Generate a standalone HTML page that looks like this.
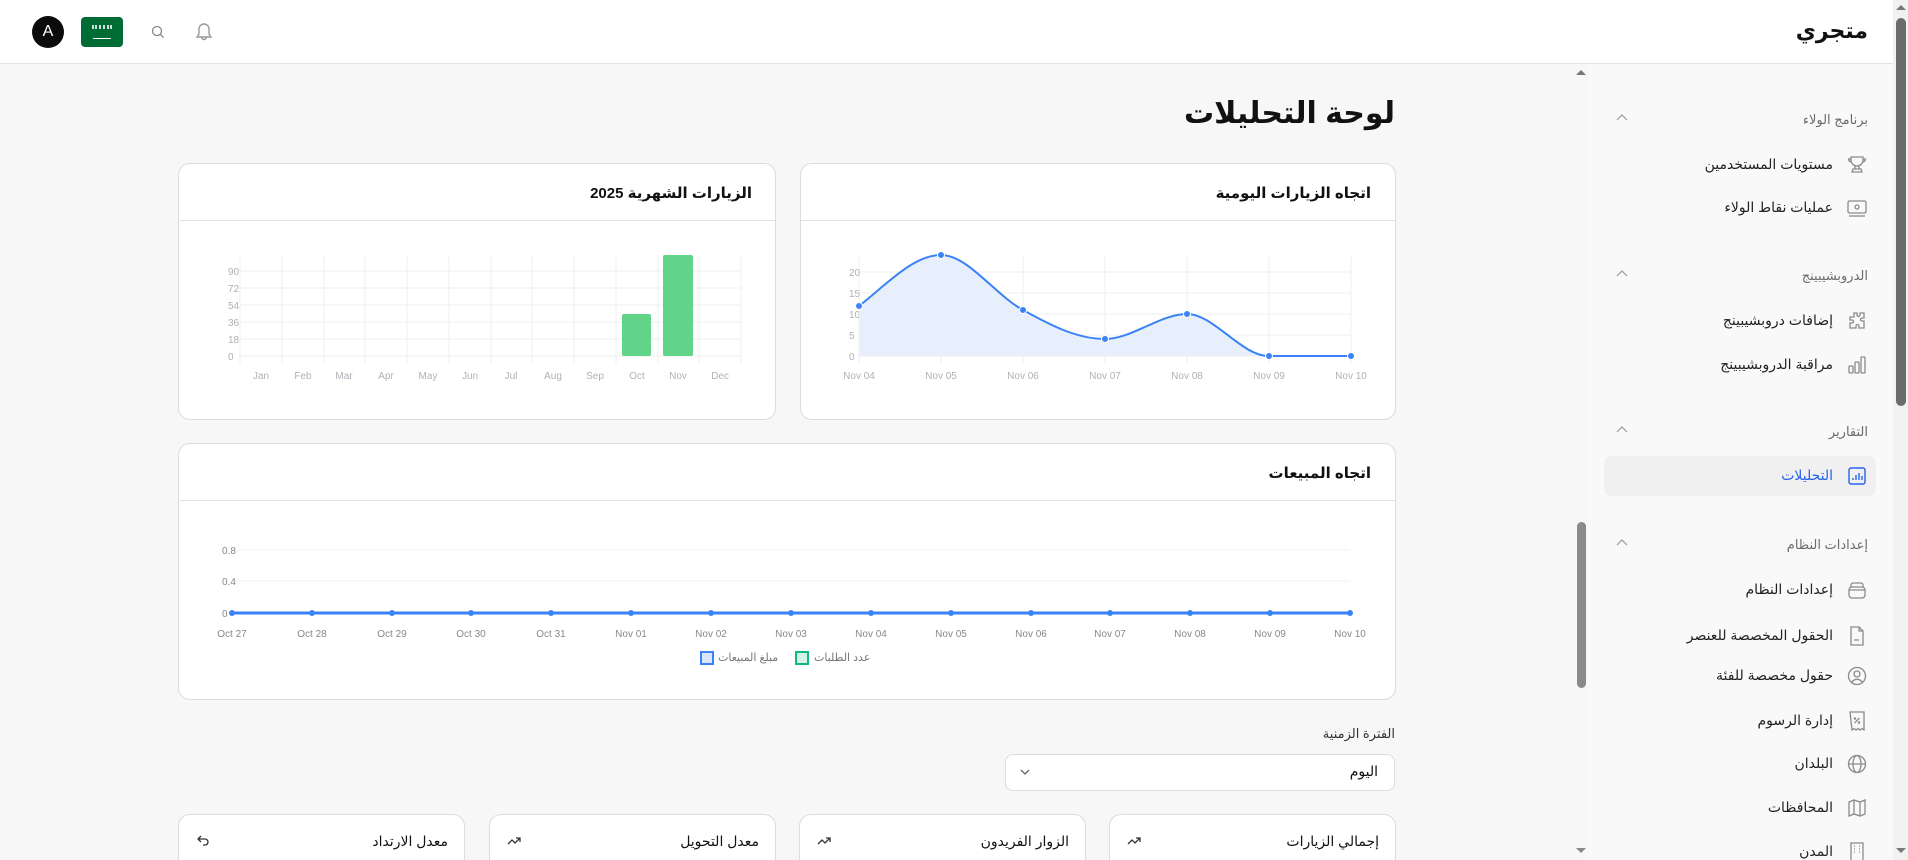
<!DOCTYPE html>
<html lang="ar" dir="rtl"><head><meta charset="utf-8"><style>
*{margin:0;padding:0;box-sizing:border-box}
html{width:1908px;height:860px;overflow:hidden}
body{width:1908px;height:860px;overflow:hidden;background:#f7f7f7;font-family:"Liberation Sans","DejaVu Sans",sans-serif;position:relative;color:#111}
.a{position:absolute}
.t{position:absolute;white-space:nowrap;direction:rtl}
.card{position:absolute;background:#fff;border:1px solid #dcdcdc;border-radius:12px;overflow:hidden}
.hd{position:absolute;left:0;right:0;top:0;height:57px;border-bottom:1px solid #e2e2e2}
.sec{font-size:13px;color:#6b6b6b}
.it{font-size:14px;color:#222}
.ic{position:absolute;width:22px;height:22px}
</style></head><body>
<div class="a" style="left:0;top:0;width:1893px;height:64px;background:#fff;border-bottom:1px solid #e2e2e2"></div>
<div class="a" style="left:32px;top:16px;width:32px;height:32px;border-radius:50%;background:#0b0b0b;color:#fff;font-size:16px;text-align:center;line-height:32px;direction:ltr">A</div>
<div class="a" style="left:81px;top:17px;width:42px;height:30px;border-radius:4px;background:#006c35">
 <div class="a" style="left:11px;top:8px;width:20px;height:4px;border-top:2px dotted #fff;border-bottom:2px dotted #fff;opacity:.8"></div>
 <div class="a" style="left:12px;top:21px;width:18px;height:1px;background:#fff"></div>
</div>
<svg class="a" style="left:150px;top:24px" width="16" height="16" viewBox="0 0 16 16" fill="none" stroke="#888" stroke-width="1.3"><circle cx="7" cy="7" r="4.5"/><path d="M10.3 10.3L13.5 13.5"/></svg>
<svg class="a" style="left:193px;top:20px" width="22" height="24" viewBox="0 0 22 24" fill="none" stroke="#999" stroke-width="1.4"><path d="M4 17h14l-2-3V9a5 5 0 0 0-10 0v5z"/><path d="M8.5 17a2.5 2.5 0 0 0 5 0"/></svg>
<div class="t" style="right:40px;top:18px;font-size:22px;font-weight:bold">متجري</div>

<div class="a" style="left:1893px;top:0;width:15px;height:860px;background:#f1f1f1"></div>
<div class="a" style="left:1896px;top:18px;width:10px;height:388px;border-radius:5px;background:#6b6b6b"></div>
<div class="a" style="left:1896px;top:5px;border:5px solid transparent;border-bottom:5px solid #777;border-top:0"></div>
<div class="a" style="left:1896px;top:848px;border:5px solid transparent;border-top:5px solid #777;border-bottom:0"></div>

<div class="a" style="left:1573px;top:65px;width:320px;height:795px;background:#f9f9f9"></div>
<div class="a" style="left:1573px;top:65px;width:15px;height:795px;background:#f7f7f7"></div>
<div class="a" style="left:1577px;top:522px;width:9px;height:166px;border-radius:5px;background:#8a8a8a"></div>
<div class="a" style="left:1576px;top:70px;border:5px solid transparent;border-bottom:5px solid #777;border-top:0"></div>
<div class="a" style="left:1576px;top:848px;border:5px solid transparent;border-top:5px solid #888;border-bottom:0"></div>

<div class="t sec" style="right:40px;top:112px">برنامج الولاء</div>
<div class="t sec" style="right:40px;top:268px">الدروبشيبينج</div>
<div class="t sec" style="right:40px;top:424px">التقارير</div>
<div class="t sec" style="right:40px;top:537px">إعدادات النظام</div>
<svg class="a" style="left:1615px;top:113px" width="14" height="10" viewBox="0 0 14 10" fill="none" stroke="#999" stroke-width="1.2"><path d="M2 7l5-5 5 5"/></svg>
<svg class="a" style="left:1615px;top:269px" width="14" height="10" viewBox="0 0 14 10" fill="none" stroke="#999" stroke-width="1.2"><path d="M2 7l5-5 5 5"/></svg>
<svg class="a" style="left:1615px;top:425px" width="14" height="10" viewBox="0 0 14 10" fill="none" stroke="#999" stroke-width="1.2"><path d="M2 7l5-5 5 5"/></svg>
<svg class="a" style="left:1615px;top:538px" width="14" height="10" viewBox="0 0 14 10" fill="none" stroke="#999" stroke-width="1.2"><path d="M2 7l5-5 5 5"/></svg>

<div class="a" style="left:1604px;top:456px;width:272px;height:40px;border-radius:8px;background:#f0f0f0"></div>

<div class="t it" style="right:75px;top:156px">مستويات المستخدمين</div>
<div class="t it" style="right:75px;top:199px">عمليات نقاط الولاء</div>
<div class="t it" style="right:75px;top:312px">إضافات دروبشيبينج</div>
<div class="t it" style="right:75px;top:356px">مراقبة الدروبشيبينج</div>
<div class="t it" style="right:75px;top:467px;color:#2563eb">التحليلات</div>
<div class="t it" style="right:75px;top:581px">إعدادات النظام</div>
<div class="t it" style="right:75px;top:627px">الحقول المخصصة للعنصر</div>
<div class="t it" style="right:75px;top:667px">حقول مخصصة للفئة</div>
<div class="t it" style="right:75px;top:712px">إدارة الرسوم</div>
<div class="t it" style="right:75px;top:755px">البلدان</div>
<div class="t it" style="right:75px;top:799px">المحافظات</div>
<div class="t it" style="right:75px;top:843px">المدن</div>

<svg class="ic" style="left:1846px;top:154px" viewBox="0 0 22 22" fill="none" stroke="#8a8a8a" stroke-width="1.3"><path d="M5 3h12v3a6 6 0 0 1-12 0z"/><path d="M5 5H2.5a3 3 0 0 0 3 3M17 5h2.5a3 3 0 0 1-3 3"/><path d="M9 12v3h4v-3M7 15h8l1 3H6z"/></svg>
<svg class="ic" style="left:1846px;top:197px" viewBox="0 0 22 22" fill="none" stroke="#8a8a8a" stroke-width="1.3"><rect x="2" y="4" width="18" height="12" rx="1.5"/><circle cx="11" cy="10" r="2"/><path d="M3 19h16"/></svg>
<svg class="ic" style="left:1846px;top:310px" viewBox="0 0 22 22" fill="none" stroke="#8a8a8a" stroke-width="1.3"><path d="M8 3h3v2a1.5 1.5 0 0 0 3 0V3h4v5h-2a1.5 1.5 0 0 0 0 3h2v7h-5v-2a1.5 1.5 0 0 0-3 0v2H4v-5h2a1.5 1.5 0 0 0 0-3H4V7h4z"/></svg>
<svg class="ic" style="left:1846px;top:354px" viewBox="0 0 22 22" fill="none" stroke="#8a8a8a" stroke-width="1.3"><rect x="3" y="12" width="4" height="7" rx="1"/><rect x="9" y="8" width="4" height="11" rx="1"/><rect x="15" y="3" width="4" height="16" rx="1"/></svg>
<svg class="ic" style="left:1846px;top:465px" viewBox="0 0 22 22" fill="none" stroke="#2563eb" stroke-width="1.4"><rect x="3" y="3" width="16" height="16" rx="2"/><path d="M7 15v-2M10 15v-5M13 15v-7M16 15v-4"/></svg>
<svg class="ic" style="left:1846px;top:579px" viewBox="0 0 22 22" fill="none" stroke="#8a8a8a" stroke-width="1.3"><rect x="3" y="8" width="16" height="11" rx="3"/><path d="M5 8V6a2 2 0 0 1 2-2h8a2 2 0 0 1 2 2v2M3 11h16"/></svg>
<svg class="ic" style="left:1846px;top:625px" viewBox="0 0 22 22" fill="none" stroke="#8a8a8a" stroke-width="1.3"><path d="M5 2h8l4 4v14H5z"/><path d="M13 2v4h4M8 15h5"/></svg>
<svg class="ic" style="left:1846px;top:665px" viewBox="0 0 22 22" fill="none" stroke="#8a8a8a" stroke-width="1.3"><circle cx="11" cy="11" r="8.5"/><circle cx="11" cy="9" r="3"/><path d="M6 17a6 6 0 0 1 10 0"/></svg>
<svg class="ic" style="left:1846px;top:710px" viewBox="0 0 22 22" fill="none" stroke="#8a8a8a" stroke-width="1.3"><path d="M4 2h14v18l-2-1.5-2 1.5-2-1.5-2 1.5-2-1.5-2 1.5z"/><path d="M8.5 13l5-5"/><circle cx="9" cy="8.5" r=".6"/><circle cx="13" cy="12.5" r=".6"/></svg>
<svg class="ic" style="left:1846px;top:753px" viewBox="0 0 22 22" fill="none" stroke="#8a8a8a" stroke-width="1.3"><circle cx="11" cy="11" r="8.5"/><ellipse cx="11" cy="11" rx="4" ry="8.5"/><path d="M2.5 11h17"/></svg>
<svg class="ic" style="left:1846px;top:797px" viewBox="0 0 22 22" fill="none" stroke="#8a8a8a" stroke-width="1.3"><path d="M3 5l5-2 6 2 5-2v14l-5 2-6-2-5 2z"/><path d="M8 3v14M14 5v14"/></svg>
<svg class="ic" style="left:1846px;top:841px" viewBox="0 0 22 22" fill="none" stroke="#8a8a8a" stroke-width="1.3"><rect x="5" y="2" width="12" height="18"/><path d="M8 5h1M13 5h1M8 8h1M13 8h1M8 11h1M13 11h1"/></svg>

<div class="t" style="right:513px;top:96px;font-size:30px;font-weight:bold">لوحة التحليلات</div>

<div class="card" style="left:178px;top:163px;width:598px;height:257px">
 <div class="hd"></div>
 <div class="t" style="right:23px;top:20px;font-size:15px;font-weight:bold">الزيارات الشهرية 2025</div>
</div>
<svg class="a" style="left:178px;top:163px" width="598" height="257" viewBox="178 163 598 257" font-family="Liberation Sans, sans-serif" font-size="10" fill="#b0b0b8">
 <g stroke="#efefef" stroke-width="1">
  <path d="M240 356H741M240 339H741M240 322H741M240 305H741M240 288H741M240 271H741"/>
  <path d="M240 255V364M282 255V364M324 255V364M365 255V364M407 255V364M449 255V364M491 255V364M532 255V364M574 255V364M616 255V364M658 255V364M699 255V364M741 255V364"/>
 </g>
 <g text-anchor="end"><text x="228" y="360">0</text><text x="228" y="343">18</text><text x="228" y="326">36</text><text x="228" y="309">54</text><text x="228" y="292">72</text><text x="228" y="275">90</text></g>
 <g text-anchor="middle"><text x="261" y="379">Jan</text><text x="303" y="379">Feb</text><text x="344" y="379">Mar</text><text x="386" y="379">Apr</text><text x="428" y="379">May</text><text x="470" y="379">Jun</text><text x="511" y="379">Jul</text><text x="553" y="379">Aug</text><text x="595" y="379">Sep</text><text x="637" y="379">Oct</text><text x="678" y="379">Nov</text><text x="720" y="379">Dec</text></g>
 <rect x="622" y="314" width="29" height="42" rx="2" fill="#62d48a"/>
 <rect x="663" y="255" width="30" height="101" rx="2" fill="#62d48a"/>
</svg>

<div class="card" style="left:800px;top:163px;width:596px;height:257px">
 <div class="hd"></div>
 <div class="t" style="right:24px;top:20px;font-size:15px;font-weight:bold">اتجاه الزيارات اليومية</div>
</div>
<svg class="a" style="left:800px;top:163px" width="596" height="257" viewBox="800 163 596 257" font-family="Liberation Sans, sans-serif" font-size="10" fill="#b0b0b8">
 <g stroke="#efefef"><path d="M859 356H1351M859 335H1351M859 314H1351M859 293H1351M859 272H1351"/><path d="M859 255V364M941 255V364M1023 255V364M1105 255V364M1187 255V364M1269 255V364M1351 255V364"/></g>
 <g text-anchor="end"><text x="849" y="360">0</text><text x="849" y="339">5</text><text x="849" y="318">10</text><text x="849" y="297">15</text><text x="849" y="276">20</text></g>
 <g text-anchor="middle"><text x="859" y="379">Nov 04</text><text x="941" y="379">Nov 05</text><text x="1023" y="379">Nov 06</text><text x="1105" y="379">Nov 07</text><text x="1187" y="379">Nov 08</text><text x="1269" y="379">Nov 09</text><text x="1351" y="379">Nov 10</text></g>
 <path d="M859 306C886 285 913 255 941 255C968 255 995 295 1023 310C1050 325 1077 339 1105 339C1132 339 1160 314 1187 314C1214 314 1241 356 1269 356L1351 356V356H859Z" fill="#e8effc"/>
 <path d="M859 306C886 285 913 255 941 255C968 255 995 295 1023 310C1050 325 1077 339 1105 339C1132 339 1160 314 1187 314C1214 314 1241 356 1269 356L1351 356" fill="none" stroke="#3b82f6" stroke-width="2"/>
 <g fill="#3b82f6" stroke="#fff" stroke-width="1"><circle cx="859" cy="306" r="3.5"/><circle cx="941" cy="255" r="3.5"/><circle cx="1023" cy="310" r="3.5"/><circle cx="1105" cy="339" r="3.5"/><circle cx="1187" cy="314" r="3.5"/><circle cx="1269" cy="356" r="3.5"/><circle cx="1351" cy="356" r="3.5"/></g>
</svg>

<div class="card" style="left:178px;top:443px;width:1218px;height:257px">
 <div class="hd"></div>
 <div class="t" style="right:24px;top:20px;font-size:15px;font-weight:bold">اتجاه المبيعات</div>
</div>
<svg class="a" style="left:178px;top:443px" width="1218" height="257" viewBox="178 443 1218 257" font-family="Liberation Sans, sans-serif" font-size="10" fill="#888">
 <g stroke="#f0f0f0"><path d="M232 550H1350M232 581H1350M232 613H1350"/></g>
 <g text-anchor="end"><text x="222" y="554">0.8</text><text x="222" y="585">0.4</text><text x="222" y="617">0</text></g>
 <path d="M232 613H1350" stroke="#3b82f6" stroke-width="3"/>
 <g fill="#3b82f6"><circle cx="232" cy="613" r="3"/><circle cx="312" cy="613" r="3"/><circle cx="392" cy="613" r="3"/><circle cx="471" cy="613" r="3"/><circle cx="551" cy="613" r="3"/><circle cx="631" cy="613" r="3"/><circle cx="711" cy="613" r="3"/><circle cx="791" cy="613" r="3"/><circle cx="871" cy="613" r="3"/><circle cx="951" cy="613" r="3"/><circle cx="1031" cy="613" r="3"/><circle cx="1110" cy="613" r="3"/><circle cx="1190" cy="613" r="3"/><circle cx="1270" cy="613" r="3"/><circle cx="1350" cy="613" r="3"/></g>
 <g text-anchor="middle"><text x="232" y="637">Oct 27</text><text x="312" y="637">Oct 28</text><text x="392" y="637">Oct 29</text><text x="471" y="637">Oct 30</text><text x="551" y="637">Oct 31</text><text x="631" y="637">Nov 01</text><text x="711" y="637">Nov 02</text><text x="791" y="637">Nov 03</text><text x="871" y="637">Nov 04</text><text x="951" y="637">Nov 05</text><text x="1031" y="637">Nov 06</text><text x="1110" y="637">Nov 07</text><text x="1190" y="637">Nov 08</text><text x="1270" y="637">Nov 09</text><text x="1350" y="637">Nov 10</text></g>
 <rect x="701" y="652" width="12" height="12" fill="#dbe6fd" stroke="#3b82f6" stroke-width="2"/>
 <rect x="796" y="652" width="12" height="12" fill="#d5f3e4" stroke="#10b981" stroke-width="2"/>
</svg>
<div class="t" style="left:718px;top:651px;font-size:11px;color:#777">مبلغ المبيعات</div>
<div class="t" style="left:814px;top:651px;font-size:11px;color:#777">عدد الطلبات</div>

<div class="t" style="right:513px;top:726px;font-size:13px;color:#333">الفترة الزمنية</div>
<div class="a" style="left:1005px;top:754px;width:390px;height:37px;background:#fff;border:1px solid #dcdcdc;border-radius:8px"></div>
<div class="t" style="right:530px;top:763px;font-size:14px">اليوم</div>
<svg class="a" style="left:1019px;top:767px" width="12" height="10" viewBox="0 0 12 10" fill="none" stroke="#666" stroke-width="1.3"><path d="M2 3l4 4 4-4"/></svg>

<div class="card" style="left:1109px;top:814px;width:287px;height:70px"><div class="t" style="right:16px;top:18px;font-size:14px">إجمالي الزيارات</div><svg class="a" style="left:17px;top:21px" width="14" height="10" viewBox="0 0 14 10" fill="none" stroke="#333" stroke-width="1.3"><path d="M1 8l4-4 3 3 5-5M9 2h4v4"/></svg><div class="t" style="right:16px;top:46px;font-size:18px;font-weight:bold">0</div></div>
<div class="card" style="left:799px;top:814px;width:287px;height:70px"><div class="t" style="right:16px;top:18px;font-size:14px">الزوار الفريدون</div><svg class="a" style="left:17px;top:21px" width="14" height="10" viewBox="0 0 14 10" fill="none" stroke="#333" stroke-width="1.3"><path d="M1 8l4-4 3 3 5-5M9 2h4v4"/></svg><div class="t" style="right:16px;top:46px;font-size:18px;font-weight:bold">0</div></div>
<div class="card" style="left:489px;top:814px;width:287px;height:70px"><div class="t" style="right:16px;top:18px;font-size:14px">معدل التحويل</div><svg class="a" style="left:17px;top:21px" width="14" height="10" viewBox="0 0 14 10" fill="none" stroke="#333" stroke-width="1.3"><path d="M1 8l4-4 3 3 5-5M9 2h4v4"/></svg><div class="t" style="right:16px;top:46px;font-size:18px;font-weight:bold">0.0%</div></div>
<div class="card" style="left:178px;top:814px;width:287px;height:70px"><div class="t" style="right:16px;top:18px;font-size:14px">معدل الارتداد</div><svg class="a" style="left:17px;top:19px" width="14" height="14" viewBox="0 0 14 14" fill="none" stroke="#333" stroke-width="1.3"><path d="M5 2L2 5l3 3M2 5h7a3 3 0 0 1 0 6H7"/></svg><div class="t" style="right:16px;top:46px;font-size:18px;font-weight:bold">0.0%</div></div>
</body></html>
